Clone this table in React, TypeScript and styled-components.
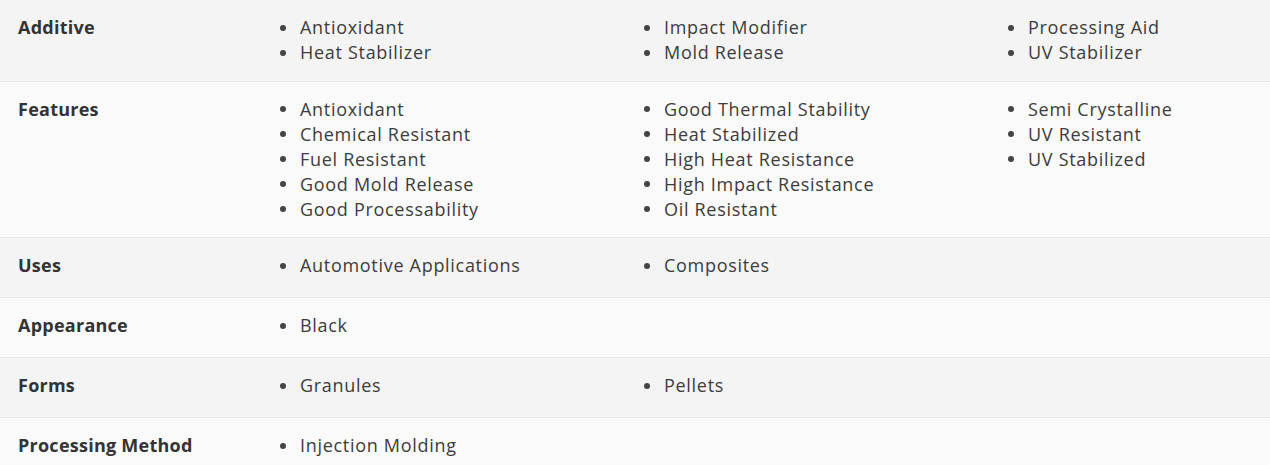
import React from "react";
import styled, { createGlobalStyle } from "styled-components";

const Global = createGlobalStyle`
  html, body { margin: 0; padding: 0; background: #fafafa; }
  body { font-family: "Open Sans", "Noto Sans", sans-serif; }
`;

const Table = styled.div`
  width: 1270px;
  height: 465px;
  overflow: hidden;
`;

const Row = styled.div<{ $odd: boolean }>`
  display: grid;
  grid-template-columns: 280px 1fr;
  align-items: start;
  box-sizing: border-box;
  min-height: 60px;
  padding: 15px 0 15.5px;
  background: ${(p) => (p.$odd ? "#f4f4f4" : "#fafafa")};
  border-bottom: 1px solid #e8e8e8;
`;

const Label = styled.div`
  padding-left: 18px;
  font-size: 18px;
  line-height: 25px;
  font-weight: 700;
  letter-spacing: 0.25px;
  color: #333333;
`;

const Values = styled.div`
  display: grid;
  grid-template-columns: repeat(3, 364px);
`;

const List = styled.ul`
  list-style: none;
  margin: 0;
  padding: 0;
`;

const Item = styled.li`
  display: flex;
  align-items: center;
  font-size: 18px;
  line-height: 25px;
  letter-spacing: 0.7px;
  color: #3c3c3c;
  white-space: nowrap;
`;

const Dot = styled.span`
  width: 6px;
  height: 6px;
  border-radius: 50%;
  background: #444;
  margin-right: 14px;
  flex: none;
`;

const data: { label: string; cols: string[][] }[] = [
  {
    label: "Additive",
    cols: [
      ["Antioxidant", "Heat Stabilizer"],
      ["Impact Modifier", "Mold Release"],
      ["Processing Aid", "UV Stabilizer"],
    ],
  },
  {
    label: "Features",
    cols: [
      ["Antioxidant", "Chemical Resistant", "Fuel Resistant", "Good Mold Release", "Good Processability"],
      ["Good Thermal Stability", "Heat Stabilized", "High Heat Resistance", "High Impact Resistance", "Oil Resistant"],
      ["Semi Crystalline", "UV Resistant", "UV Stabilized"],
    ],
  },
  { label: "Uses", cols: [["Automotive Applications"], ["Composites"]] },
  { label: "Appearance", cols: [["Black"]] },
  { label: "Forms", cols: [["Granules"], ["Pellets"]] },
  { label: "Processing Method", cols: [["Injection Molding"]] },
];

export default function App() {
  return (
    <>
      <Global />
      <Table>
        {data.map((row, i) => (
          <Row key={row.label} $odd={i % 2 === 0}>
            <Label>{row.label}</Label>
            <Values>
              {row.cols.map((col, j) => (
                <List key={j}>
                  {col.map((v) => (
                    <Item key={v}>
                      <Dot />
                      {v}
                    </Item>
                  ))}
                </List>
              ))}
            </Values>
          </Row>
        ))}
      </Table>
    </>
  );
}
